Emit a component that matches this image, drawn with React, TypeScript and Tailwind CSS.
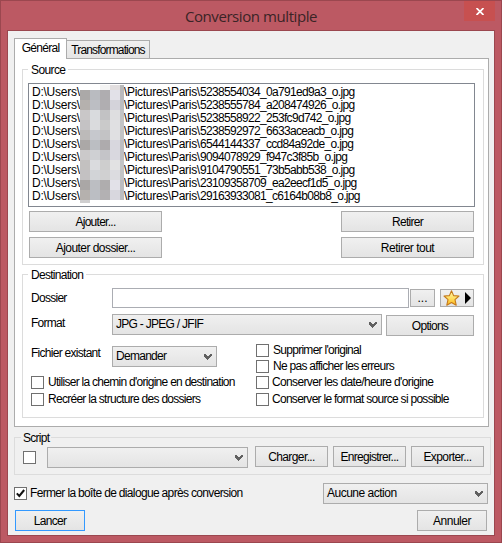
import { useState, type ReactNode } from 'react';
import { clsx } from 'clsx';

const FILES = [
  '5238554034_0a791ed9a3_o.jpg',
  '5238555784_a208474926_o.jpg',
  '5238558922_253fc9d742_o.jpg',
  '5238592972_6633aceacb_o.jpg',
  '6544144337_ccd84a92de_o.jpg',
  '9094078929_f947c3f85b_o.jpg',
  '9104790551_73b5abb538_o.jpg',
  '23109358709_ea2eecf1d5_o.jpg',
  '29163933081_c6164b08b8_o.jpg',
];

// 10px blocks that hide the user name, last column is only 4px wide
const MOSAIC = [
  ['#aba9a8', '#b9bbc0', '#afadb0', '#e2e1e8', '#b9b9bd'],
  ['#b5b1ae', '#bcbec3', '#b0aeb1', '#d4d3da', '#bcbdc1'],
  ['#c9c7c8', '#d9dbde', '#c2c2c4', '#dedee0', '#c2c3c5'],
  ['#c4c2c4', '#dadbdd', '#cacaca', '#e0e0e2', '#c3c4c6'],
  ['#bcbab9', '#c6c8cd', '#c3c3c5', '#e0e0e2', '#c2c3c5'],
  ['#aba8a7', '#bbbec2', '#aeabad', '#d8d7de', '#bdbec2'],
  ['#cbc9ca', '#cfd0d3', '#c4c4c8', '#d9d8df', '#bcbdc1'],
  ['#c3c1c0', '#dadbde', '#cecece', '#e2e2e3', '#c3c4c6'],
  ['#c3c1c2', '#d2d4d7', '#d0d0d1', '#dcdce0', '#c2c3c5'],
  ['#aaa7a6', '#bcbec2', '#afadae', '#e2e1e8', '#bcbdc1'],
  ['#b5b1ae', '#bbbec3', '#b3b1b3', '#d8d7de', '#bcbdc1'],
];

function Mosaic() {
  return (
    <svg className="absolute left-[51px] top-[1px]" width="44" height="118" shapeRendering="crispEdges">
      <rect x="20" y="0" width="10" height="5" fill="#f4f4f4" />
      <rect x="30" y="0" width="10" height="5" fill="#e2dedf" />
      <rect x="40" y="0" width="4" height="5" fill="#b9b9b9" />
      {MOSAIC.map((row, y) =>
        row.map((fill, x) => (
          <rect key={`${x}-${y}`} x={x * 10} y={5 + y * 10} width={x === 4 ? 4 : 10} height="10" fill={fill} />
        ))
      )}
      <rect x="0" y="115" width="10" height="3" fill="#cfcecf" />
    </svg>
  );
}

function Button({ className, children }: { className?: string; children: ReactNode }) {
  return (
    <button
      type="button"
      className={clsx(
        'flex shrink-0 items-center justify-center border bg-linear-to-b from-[#f0f0f0] to-[#e4e4e4]',
        className
      )}
    >
      {children}
    </button>
  );
}

function Select({ value, className }: { value?: string; className?: string }) {
  return (
    <button
      type="button"
      className={clsx(
        'flex h-[21px] shrink-0 items-center justify-between border border-[#acacac] bg-linear-to-b from-[#f0f0f0] to-[#e4e4e4] pl-[3px] pr-[4px]',
        className
      )}
    >
      <span>{value}</span>
      <svg width="8" height="6" viewBox="0 0 8 6" fill="#606060" shapeRendering="crispEdges">
        <path d="M0 0h2v1h1v1h2v-1h1v-1h2v2h-1v1h-1v1h-1v1h-1v1h-0v0h-1v-1h-1v-1h-1v-1h-1v-1h-1z" />
      </svg>
    </button>
  );
}

function Checkbox({ label, defaultOn = false, className = 'gap-[4px]' }: { label?: string; defaultOn?: boolean; className?: string }) {
  const [on, setOn] = useState(defaultOn);
  return (
    <div className={clsx('flex h-[13px] items-center whitespace-nowrap', className)} onClick={() => setOn(!on)}>
      <span className="flex size-[13px] shrink-0 items-center justify-center border border-[#707070] bg-white">
        {on && (
          <svg width="9" height="9" viewBox="0 0 9 9" fill="none" stroke="#111" strokeWidth="2">
            <path d="M0.8 4.4L3.3 7L8.2 1" />
          </svg>
        )}
      </span>
      {label && <span>{label}</span>}
    </div>
  );
}

function Group({ title, className, legend, children }: { title: string; className?: string; legend: string; children: ReactNode }) {
  return (
    <div className={clsx('relative border border-[#dcdcdc]', className)}>
      <span className={clsx('absolute -top-[7px] h-[14px] leading-[14px]', legend)}>{title}</span>
      {children}
    </div>
  );
}

export default function App() {
  const [tab, setTab] = useState('general');

  return (
    <div className="flex h-[543px] w-[502px] flex-col border border-[#9b474f] bg-[#bc5963] font-['Liberation_Sans',sans-serif] text-[12px] leading-[13px] tracking-[-0.72px] text-black">
      {/* Title bar */}
      <div className="relative h-[29px] shrink-0">
        <h1 className="pt-[5px] text-center font-['Open_Sans',sans-serif] text-[15px] leading-[20px] tracking-[-0.42px] text-[#3a2426]">
          Conversion multiple
        </h1>
        <button type="button" className="absolute right-[6px] top-0 flex h-[20px] w-[31px] items-center justify-center bg-[#c75050]">
          <svg width="8" height="7" viewBox="0 0 8 7" stroke="#fff" strokeWidth="1.7">
            <path d="M0.5 0L7.5 7M7.5 0L0.5 7" />
          </svg>
        </button>
      </div>

      <div className="mx-[6px] h-[506px] shrink-0 border border-[#9b474f] bg-[#f0f0f0] pl-[6px] pt-[7px]">
        {/* Tabs */}
        <div className="flex h-[20px] items-end">
          <button
            type="button"
            onClick={() => setTab('general')}
            className="relative z-10 -mb-px h-[21px] w-[53px] border border-b-0 border-[#acacac] bg-white pb-[2px]"
          >
            Général
          </button>
          <button
            type="button"
            onClick={() => setTab('transformations')}
            className="h-[18px] w-[83px] border border-b-0 border-l-0 border-[#acacac] bg-linear-to-b from-[#f0f0f0] to-[#e5e5e5] pt-px tracking-[-0.85px]"
          >
            Transformations
          </button>
        </div>

        <div className="h-[369px] w-[475px] border border-[#acacac] bg-white pl-[7px] pt-[10px]">
          {tab === 'general' && (
            <>
              <Group title="Source" legend="left-[5px] bg-white pl-[3px] pr-[3px] tracking-[-0.6px]" className="h-[196px] w-[462px] pl-[5px] pt-[13px]">
                <div className="relative h-[124px] w-[447px] border border-[#828790] bg-white pl-[3px] pt-[2px]">
                  {FILES.map((file) => (
                    <div key={file} className="flex h-[13px] whitespace-nowrap">
                      <span className="w-[92px] tracking-[-0.25px]">{'D:\\Users\\'}</span>
                      <span className="w-[76px] tracking-[-0.3px]">{'\\Pictures\\Paris\\'}</span>
                      <span className="tracking-[-0.68px]">{file}</span>
                    </div>
                  ))}
                  <Mosaic />
                </div>
                <div className="ml-px mt-[4px] grid w-[445px] grid-cols-[133px_133px] justify-between gap-y-[5px]">
                  <Button className="h-[21px] border-[#acacac] pt-px">Ajouter...</Button>
                  <Button className="h-[21px] border-[#acacac] pt-px">Retirer</Button>
                  <Button className="h-[21px] border-[#acacac] pt-px tracking-[-0.55px]">Ajouter dossier...</Button>
                  <Button className="h-[21px] border-[#acacac] pt-px tracking-[-0.5px]">Retirer tout</Button>
                </div>
              </Group>

              <Group title="Destination" legend="left-[5px] bg-white pl-[3px] pr-[3px]" className="mt-[9px] h-[144px] w-[462px] pl-[8px] pt-[13px]">
                <div className="flex h-[20px] items-center">
                  <span className="w-[81px]">Dossier</span>
                  <input type="text" className="h-[20px] w-[297px] border border-[#abadb3] bg-white px-1 outline-none" />
                  <Button className="ml-px h-[18px] w-[25px] border-[#acacac] pt-px tracking-[0px]">...</Button>
                  <Button className="ml-[5px] h-[18px] w-[34px] gap-[5px] border-[#acacac]">
                    <svg width="17" height="16" viewBox="0 0 17 16">
                      <defs>
                        <linearGradient id="gold" x1="0" y1="0" x2="0" y2="1">
                          <stop offset="0" stopColor="#fff6b0" />
                          <stop offset="0.5" stopColor="#ffe066" />
                          <stop offset="1" stopColor="#fdb515" />
                        </linearGradient>
                      </defs>
                      <path
                        d="M8.5 0.8L10.6 5.6L16 6L12 9.7L13.2 15.2L8.5 12.5L3.8 15.2L5 9.7L1 6L6.4 5.6Z"
                        fill="url(#gold)"
                        stroke="#c47a1c"
                        strokeWidth="1.1"
                        strokeLinejoin="round"
                      />
                    </svg>
                    <svg width="6" height="12" viewBox="0 0 6 12">
                      <path d="M0 0L6 6L0 12Z" fill="#000" />
                    </svg>
                  </Button>
                </div>

                <div className="mt-[6px] flex h-[22px] items-start">
                  <span className="w-[81px] pt-[3px]">Format</span>
                  <Select value="JPG - JPEG / JFIF" className="w-[270px]" />
                  <Button className="ml-[4px] mt-px h-[21px] w-[88px] border-[#acacac] pt-px">Options</Button>
                </div>

                <div className="mt-[8px] flex">
                  <div className="w-[225px]">
                    <div className="mt-[2px] flex h-[21px] items-start">
                      <span className="w-[81px] pt-px">Fichier existant</span>
                      <Select value="Demander" className="w-[105px]" />
                    </div>
                    <div className="mt-[9px] flex flex-col gap-[4px]">
                      <Checkbox label="Utiliser la chemin d'origine en destination" />
                      <Checkbox label="Recréer la structure des dossiers" />
                    </div>
                  </div>
                  <div className="flex flex-col gap-[3px]">
                    <Checkbox label="Supprimer l'original" />
                    <Checkbox label="Ne pas afficher les erreurs" />
                    <Checkbox label="Conserver les date/heure d'origine" className="gap-[3px] tracking-[-0.64px]" />
                    <div className="mt-px">
                      <Checkbox label="Conserver le format source si possible" className="gap-[3px]" />
                    </div>
                  </div>
                </div>
              </Group>
            </>
          )}
        </div>

        <Group title="Script" legend="left-[6px] bg-[#f0f0f0] pl-[2px] pr-[2px]" className="mt-[10px] flex h-[38px] w-[477px] items-start pl-[8px] pt-[8px]">
          <div className="mt-[5px]">
            <Checkbox />
          </div>
          <Select className="ml-[11px] mt-px w-[201px]" />
          <Button className="ml-[7px] h-[21px] w-[73px] border-[#acacac] pt-px tracking-[-0.6px]">Charger...</Button>
          <Button className="ml-[5px] h-[21px] w-[73px] border-[#acacac] pt-px">Enregistrer...</Button>
          <Button className="ml-[5px] h-[21px] w-[73px] border-[#acacac] pt-px tracking-[-0.6px]">Exporter...</Button>
        </Group>

        <div className="mt-[8px] flex h-[21px] w-[474px] items-center justify-between">
          <Checkbox label="Fermer la boîte de dialogue après conversion" defaultOn className="gap-[3px] tracking-[-0.66px]" />
          <Select value="Aucune action" className="w-[165px] tracking-[-0.5px]" />
        </div>

        <div className="ml-px mt-[6px] flex w-[472px] justify-between">
          <Button className="h-[21px] w-[70px] border-[#3399ff] pt-px">Lancer</Button>
          <Button className="h-[21px] w-[70px] border-[#acacac] pt-px tracking-[-0.5px]">Annuler</Button>
        </div>
      </div>
    </div>
  );
}
